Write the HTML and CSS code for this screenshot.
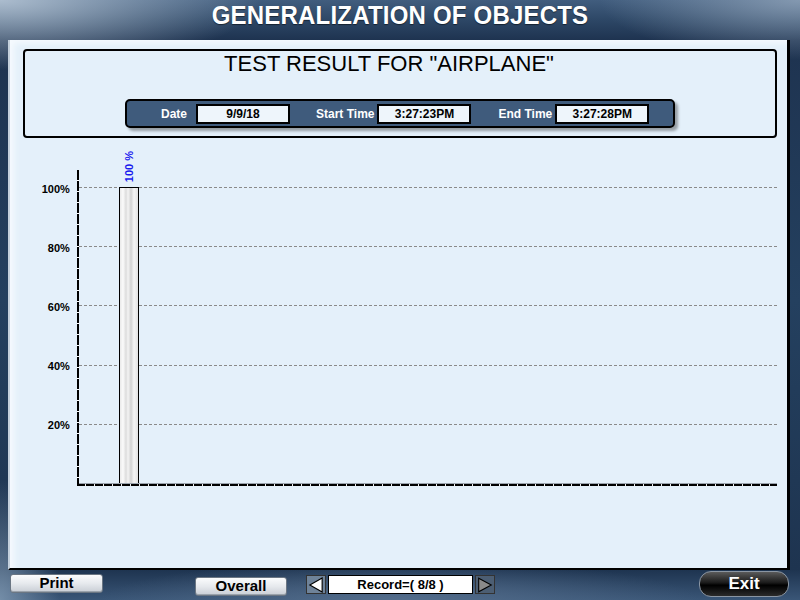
FILE: index.html
```html
<!DOCTYPE html>
<html>
<head>
<meta charset="utf-8">
<link rel="stylesheet" href="styles.css">
</head>
<body>
<div class="app">
  <header class="topbar"><h1 class="title">GENERALIZATION OF OBJECTS</h1></header>
  <main class="panel">
    <section class="result-box">
      <h2 class="result-title">TEST RESULT FOR "AIRPLANE"</h2>
      <div class="info-bar">
        <span class="info-label lbl-date">Date</span>
        <span class="info-field">9/9/18</span>
        <span class="info-label lbl-start">Start Time</span>
        <span class="info-field">3:27:23PM</span>
        <span class="info-label lbl-end">End Time</span>
        <span class="info-field">3:27:28PM</span>
      </div>
    </section>
    <section class="chart">
      <div class="y-labels">
        <span>100%</span><span>80%</span><span>60%</span><span>40%</span><span>20%</span>
      </div>
      <div class="plot-wrap">
        <div class="y-axis"></div>
        <div class="plot">
          <div class="grid" style="top:0%"></div>
          <div class="grid" style="top:20%"></div>
          <div class="grid" style="top:40%"></div>
          <div class="grid" style="top:60%"></div>
          <div class="grid" style="top:80%"></div>
          <div class="bar" style="height:100%">
            <span class="bar-label">100 %</span>
          </div>
        </div>
        <div class="x-axis"></div>
      </div>
    </section>
  </main>
  <footer class="bottombar">
    <button class="btn btn-print">Print</button>
    <button class="btn btn-overall">Overall</button>
    <div class="nav">
      <span class="arrow arrow-left"><svg width="19" height="18" viewBox="0 0 19 18"><polygon points="16,1.5 3,9 16,16.5" fill="#fff" stroke="#000" stroke-width="1.2"/></svg></span>
      <span class="record">Record=( 8/8 )</span>
      <span class="arrow arrow-right"><svg width="20" height="18" viewBox="0 0 20 18"><polygon points="3,1.5 17,9 3,16.5" fill="#8a8a8a" stroke="#000" stroke-width="1.2"/></svg></span>
    </div>
    <button class="btn-exit">Exit</button>
  </footer>
</div>
</body>
</html>
```

FILE: styles.css
```css
* { box-sizing: border-box; }
html, body { margin: 0; padding: 0; }
body {
  width: 800px;
  height: 600px;
  overflow: hidden;
  font-family: "Liberation Sans", Arial, sans-serif;
}
.app {
  width: 800px;
  height: 600px;
  display: flex;
  flex-direction: column;
  background:
    radial-gradient(ellipse 260px 70px at 0 0, rgba(190,205,220,0.85), rgba(190,205,220,0) 100%),
    radial-gradient(ellipse 200px 60px at 100% 0, rgba(160,178,198,0.7), rgba(160,178,198,0) 100%),
    radial-gradient(ellipse 60px 120px at 0 100%, rgba(130,155,180,0.8), rgba(130,155,180,0) 100%),
    radial-gradient(ellipse 300px 40px at 50% 100%, rgba(90,115,145,0.8), rgba(90,115,145,0) 100%),
    linear-gradient(#415d7e 0, #2d4766 20px, #1e3350 40px, #24405f 300px, #1e3450 570px, #3a5677 600px);
}
.topbar {
  height: 40px;
  display: flex;
  justify-content: center;
  align-items: flex-start;
}
.title {
  margin: 1px 0 0 0;
  font-size: 24px;
  font-weight: bold;
  color: #fff;
  letter-spacing: 0.2px;
  transform: scaleY(1.08);
  text-shadow: 0 1px 1px rgba(0,0,0,0.5);
}
.panel {
  margin-left: 8px;
  width: 782px;
  height: 530px;
  background: #e4f0fa;
  border-right: 3px solid #000;
  border-bottom: 2px solid #000;
  border-left: 2px solid #c4d0dc;
  box-shadow: inset 7px 6px 6px -3px #f6fafe;
  padding: 9px 10px 0 13px;
  display: flex;
  flex-direction: column;
}
.result-box {
  height: 89px;
  border: 2px solid #000;
  border-radius: 4px;
  display: flex;
  flex-direction: column;
  align-items: center;
}
.result-title {
  margin: 0 22px 0 0;
  font-size: 22px;
  font-weight: normal;
  color: #000;
  line-height: 26px;
}
.info-bar {
  margin: 22px 0 0 0;
  width: 550px;
  height: 29px;
  background: #3f5b7c;
  border: 2px solid #000;
  border-radius: 5px;
  box-shadow: 3px 3px 3px rgba(0,0,0,0.35);
  display: flex;
  align-items: center;
  padding-left: 34px;
}
.info-label {
  color: #fff;
  font-weight: bold;
  font-size: 12px;
}
.lbl-date { margin-right: 9px; }
.lbl-start { margin: 0 3px 0 26px; }
.lbl-end { margin: 0 3px 0 27px; }
.info-field {
  width: 94px;
  height: 20px;
  background: #eef5fb;
  border: 2px solid #000;
  font-weight: bold;
  font-size: 12px;
  display: flex;
  align-items: center;
  justify-content: center;
  color: #000;
}
.chart {
  margin-top: 32px;
  display: flex;
}
.y-labels {
  width: 47px;
  padding-top: 10px;
  display: flex;
  flex-direction: column;
  align-items: flex-end;
  gap: 41px;
  font-size: 11px;
  font-weight: bold;
  color: #000;
}
.y-labels span { line-height: 18px; }
.plot-wrap {
  margin-left: 7px;
  width: 703px;
  height: 316px;
  padding-top: 17px;
  padding-left: 2px;
  position: relative;
  display: flex;
  flex-direction: column;
}
.y-axis {
  position: absolute;
  left: 0;
  top: 0;
  bottom: 0;
  width: 2px;
  background: repeating-linear-gradient(to bottom, #000 0 10px, #fff 10px 11px);
}
.plot {
  position: relative;
  flex: 1;
}
.grid {
  position: absolute;
  left: 0;
  right: 0;
  height: 0;
  border-top: 1px dashed #8a8a8a;
}
.bar {
  position: absolute;
  left: 40px;
  bottom: 0;
  width: 20px;
  border: 1px solid #000;
  border-bottom: none;
  background: linear-gradient(to right, #e9e9e9 0, #fbfbfb 3px, #dcdcdc 6px, #f4f4f4 8px, #d2d2d2 11px, #f5f5f5 14px, #e2e2e2 18px);
}
.bar-label {
  position: absolute;
  bottom: 100%;
  left: 0;
  right: 0;
  margin-bottom: 6px;
  display: flex;
  justify-content: center;
  white-space: nowrap;
  writing-mode: vertical-rl;
  transform: rotate(180deg);
  font-size: 11px;
  font-weight: bold;
  color: #1a1aee;
  line-height: 18px;
}
.x-axis {
  height: 3px;
  margin-left: -2px;
  background: repeating-linear-gradient(to right, #000 0 8px, #f0f0f0 8px 9px);
  border-top: 1px solid #9aa3ad;
}
.bottombar {
  flex: 1;
  display: flex;
  align-items: center;
  padding-left: 10px;
}
.btn {
  font-family: "Liberation Sans", Arial, sans-serif;
  font-weight: bold;
  font-size: 15px;
  color: #000;
  height: 19px;
  padding: 0;
  border: 1px solid #6b7683;
  border-radius: 3px;
  background: linear-gradient(#fbfcfd, #e6e9ed 50%, #c9ced5);
  box-shadow: inset 0 -1px 0 #9aa2ab;
  line-height: 16px;
}
.btn-print { width: 93px; margin-top: -4px; }
.btn-overall { width: 92px; margin-left: 92px; margin-top: 2px; }
.nav {
  margin-left: 19px;
  display: flex;
  align-items: center;
  margin-top: -2px;
}
.arrow {
  display: flex;
  width: 20px;
  height: 19px;
  border: 1px solid #333;
}
.arrow-left { background: #6f8399; }
.arrow-right { background: #4c5e73; margin-left: 2px; }
.record {
  margin-left: 2px;
  width: 145px;
  height: 19px;
  background: #fff;
  border: 1px solid #000;
  font-size: 13px;
  font-weight: bold;
  display: flex;
  align-items: center;
  justify-content: center;
}
.btn-exit {
  margin-left: auto;
  margin-right: 11px;
  width: 90px;
  height: 26px;
  border-radius: 12px;
  border: 1px solid #8a95a2;
  background: linear-gradient(#5a5a5a 0, #1a1a1a 45%, #000 55%, #2a2a2a 100%);
  color: #fff;
  font-family: "Liberation Sans", Arial, sans-serif;
  font-weight: bold;
  font-size: 17px;
  padding: 0;
  margin-top: -2px;
}
```
